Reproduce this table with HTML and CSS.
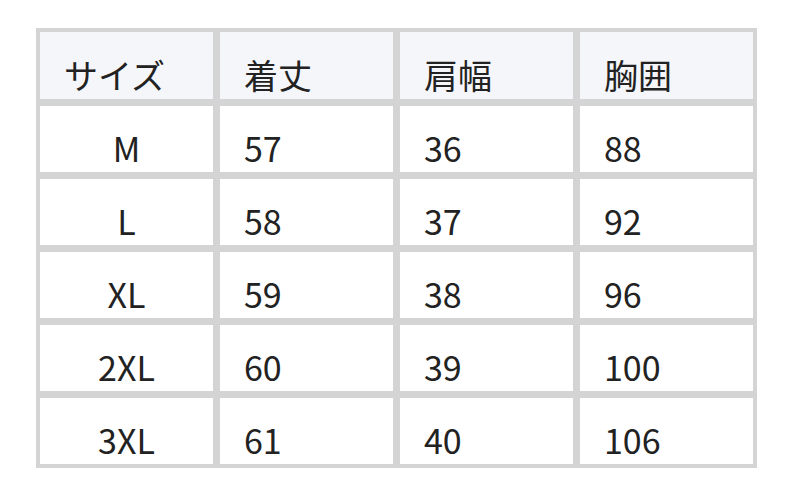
FILE: index.html
```html
<!DOCTYPE html>
<html lang="ja">
<head>
<meta charset="utf-8">
<link rel="stylesheet" href="styles.css">
</head>
<body>
<div class="size-table">
  <div class="cell head">サイズ</div>
  <div class="cell head">着丈</div>
  <div class="cell head">肩幅</div>
  <div class="cell head">胸囲</div>

  <div class="cell center">M</div>
  <div class="cell">57</div>
  <div class="cell">36</div>
  <div class="cell">88</div>

  <div class="cell center">L</div>
  <div class="cell">58</div>
  <div class="cell">37</div>
  <div class="cell">92</div>

  <div class="cell center">XL</div>
  <div class="cell">59</div>
  <div class="cell">38</div>
  <div class="cell">96</div>

  <div class="cell center">2XL</div>
  <div class="cell">60</div>
  <div class="cell">39</div>
  <div class="cell">100</div>

  <div class="cell center">3XL</div>
  <div class="cell">61</div>
  <div class="cell">40</div>
  <div class="cell">106</div>
</div>
</body>
</html>
```

FILE: styles.css
```css
html, body {
  margin: 0;
  padding: 0;
  background: #ffffff;
}
body {
  padding: 28px 0 0 36px;
  font-family: "Noto Sans CJK JP", "Noto Sans", sans-serif;
  color: #222222;
}
.size-table {
  display: grid;
  grid-template-columns: repeat(4, 173px);
  grid-template-rows: 67px repeat(5, 66px);
  gap: 7px;
  padding: 4px;
  background: #d4d4d4;
  width: max-content;
}
.cell {
  background: #ffffff;
  display: flex;
  align-items: flex-end;
  padding-left: 24px;
  font-size: 34px;
  line-height: normal;
  white-space: nowrap;
}
.cell.head {
  background: #f5f6fa;
}
.cell.center {
  justify-content: center;
  padding-left: 0;
}
```
